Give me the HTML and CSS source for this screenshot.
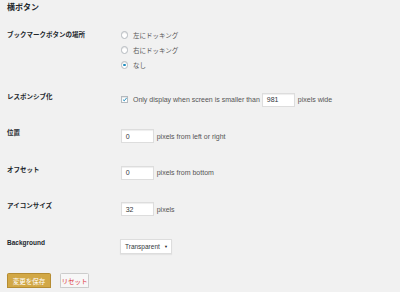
FILE: index.html
```html
<!DOCTYPE html>
<html lang="ja">
<head>
  <meta charset="UTF-8">
  <meta name="viewport" content="width=device-width, initial-scale=1.0">
  <title>横ボタン</title>
  <link rel="stylesheet" href="styles.css">
</head>
<body>
  <div class="wrap">
    <h2 class="section-title">横ボタン</h2>

    <div class="form-table">
      <!-- Bookmark button position -->
      <div class="row row-radios">
        <div class="row-label">ブックマークボタンの場所</div>
        <div class="row-field">
          <label class="radio-line"><span class="radio"></span>左にドッキング</label>
          <label class="radio-line"><span class="radio"></span>右にドッキング</label>
          <label class="radio-line"><span class="radio checked"></span>なし</label>
        </div>
      </div>

      <div class="row">
        <div class="row-label">レスポンシブ化</div>
        <div class="row-field">
          <span class="check">
            <svg width="7" height="7" viewBox="0 0 7 7"><path d="M1.2 3.6 L2.8 5.2 L5.9 1.4" fill="none" stroke="#1e8cbe" stroke-width="1.2"/></svg>
          </span>
          <span class="field-text">Only display when screen is smaller than</span>
          <span class="text-input">981</span>
          <span class="field-text">pixels wide</span>
        </div>
      </div>

      <div class="row">
        <div class="row-label">位置</div>
        <div class="row-field">
          <span class="text-input first">0</span>
          <span class="field-text">pixels from left or right</span>
        </div>
      </div>

      <div class="row">
        <div class="row-label">オフセット</div>
        <div class="row-field">
          <span class="text-input first">0</span>
          <span class="field-text">pixels from bottom</span>
        </div>
      </div>

      <div class="row">
        <div class="row-label">アイコンサイズ</div>
        <div class="row-field">
          <span class="text-input first">32</span>
          <span class="field-text">pixels</span>
        </div>
      </div>

      <div class="row">
        <div class="row-label">Background</div>
        <div class="row-field">
          <span class="select">Transparent<span class="select-arrow">▼</span></span>
        </div>
      </div>
    </div>

    <div class="submit">
      <button class="btn btn-primary">変更を保存</button>
      <button class="btn btn-reset">リセット</button>
    </div>
  </div>
</body>
</html>
```

FILE: styles.css
```css
body {
  margin: 0;
  background-color: #f1f1f1;
  color: #444;
  font-family: "Liberation Sans", "Noto Sans CJK JP", sans-serif;
  font-size: 6.5px;
}
.wrap {
  padding: 3px 7px 0;
}
.section-title {
  margin: 0;
  font-size: 8px;
  line-height: 10px;
  font-weight: bold;
  color: #23282d;
}
.form-table {
  margin-top: 3px;
}
.row {
  display: grid;
  grid-template-columns: 113px 1fr;
  padding: 11.3px 0;
}
.row-radios {
  padding-bottom: 9px;
}
.row-label {
  font-weight: bold;
  color: #23282d;
  line-height: 8px;
}
.row-radios .row-label {
  padding-top: 3.5px;
}
.row-field {
  display: flex;
  align-items: center;
  color: #555;
}
.row-radios .row-field {
  flex-direction: column;
  align-items: flex-start;
}
.radio-line {
  display: flex;
  align-items: center;
  height: 15px;
}
.radio {
  width: 5.6px;
  height: 5.6px;
  margin: 0 4.7px 0 0.7px;
  border: 0.7px solid #b4b9be;
  border-radius: 50%;
  background: #fff;
  box-shadow: inset 0 1px 1px rgba(0, 0, 0, 0.1);
  display: flex;
  align-items: center;
  justify-content: center;
}
.radio.checked::after {
  content: "";
  width: 2.4px;
  height: 2.4px;
  border-radius: 50%;
  background: #1e8cbe;
}
.check {
  width: 5.6px;
  height: 5.6px;
  margin: 0 4.7px 0 0.7px;
  border: 0.7px solid #b4b9be;
  background: #fff;
  box-shadow: inset 0 1px 1px rgba(0, 0, 0, 0.1);
  display: flex;
  align-items: center;
  justify-content: center;
}
.field-text {
  white-space: nowrap;
  font-size: 7px;
}
.text-input {
  box-sizing: border-box;
  width: 33px;
  height: 14px;
  margin: 0 3px 0 2px;
  padding-left: 4px;
  display: flex;
  align-items: center;
  background: #fff;
  border: 0.7px solid #ddd;
  box-shadow: inset 0 1px 1px rgba(0, 0, 0, 0.07);
  color: #32373c;
  font-size: 7px;
}
.text-input.first {
  margin-left: 0.7px;
}
.select {
  box-sizing: border-box;
  width: 52px;
  height: 15px;
  padding: 0 3px 0 4px;
  display: flex;
  align-items: center;
  justify-content: space-between;
  background: #fff;
  border: 0.7px solid #ddd;
  box-shadow: 0 1px 1px rgba(0, 0, 0, 0.05);
  color: #32373c;
}
.select-arrow {
  font-size: 4px;
  color: #222;
}
.submit {
  display: flex;
  gap: 9px;
  margin-top: 8px;
}
.btn {
  box-sizing: border-box;
  height: 15px;
  padding: 0;
  white-space: nowrap;
  font-family: "Liberation Sans", "Noto Sans CJK JP", sans-serif;
  font-size: 6.5px;
  border-radius: 1.5px;
}
.btn-primary {
  width: 44px;
  background: #d2a846;
  border: 0.7px solid #b58c33;
  color: #fff;
  box-shadow: 0 1px 0 #b58c33;
}
.btn-reset {
  width: 29px;
  background: #f7f7f7;
  border: 0.7px solid #ccc;
  color: #dc3232;
  box-shadow: 0 1px 0 #ccc;
}
```
